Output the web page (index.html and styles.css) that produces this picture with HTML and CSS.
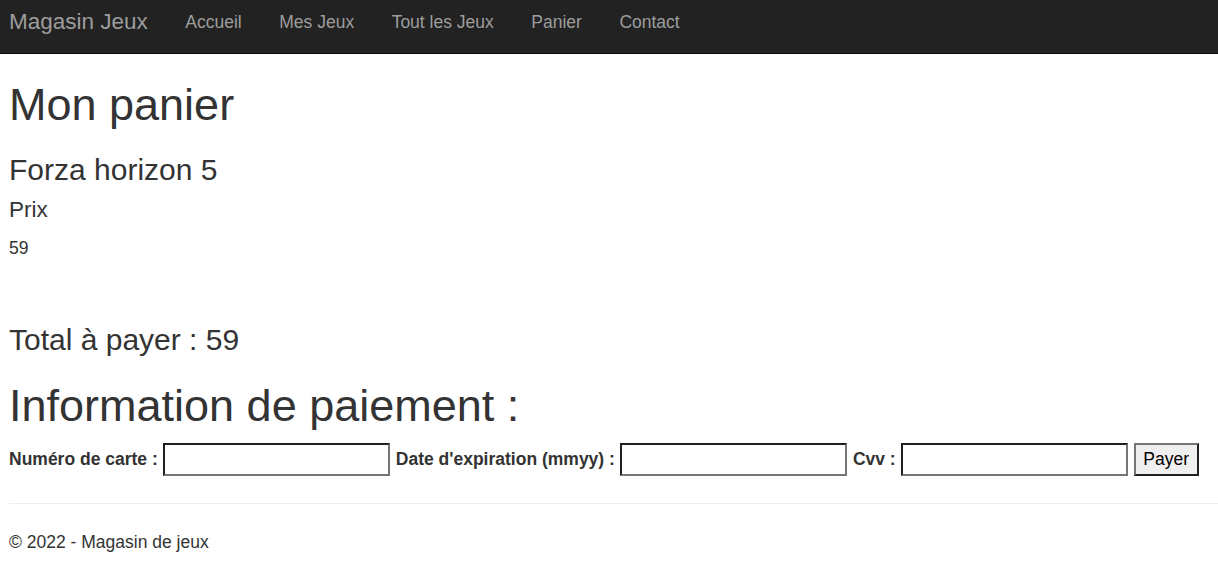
FILE: index.html
```html
<!DOCTYPE html>
<html lang="fr">
<head>
<meta charset="utf-8">
<title>Mon panier - Magasin Jeux</title>
<link rel="stylesheet" href="styles.css">
</head>
<body>
<nav class="navbar">
  <a class="brand" href="#">Magasin Jeux</a>
  <ul class="nav">
    <li><a href="#">Accueil</a></li>
    <li><a href="#">Mes Jeux</a></li>
    <li><a href="#">Tout les Jeux</a></li>
    <li><a href="#">Panier</a></li>
    <li><a href="#">Contact</a></li>
  </ul>
</nav>
<main class="content">
  <h1 class="title">Mon panier</h1>
  <h3 class="game">Forza horizon 5</h3>
  <h4 class="price-label">Prix</h4>
  <p class="price">59</p>
  <h3 class="total">Total à payer : 59</h3>
  <h1 class="pay-title">Information de paiement :</h1>
  <form class="pay-form">
    <label class="lbl" for="card">Numéro de carte :</label>
    <input class="field" id="card" type="text">
    <label class="lbl" for="exp">Date d'expiration (mmyy) :</label>
    <input class="field" id="exp" type="text">
    <label class="lbl" for="cvv">Cvv :</label>
    <input class="field" id="cvv" type="text">
    <button class="btn" type="button">Payer</button>
  </form>
  <hr class="sep">
  <footer class="footer">
    <p>© 2022 - Magasin de jeux</p>
  </footer>
</main>
</body>
</html>
```
FILE: styles.css
```css
* { box-sizing: border-box; }
html, body { margin: 0; padding: 0; }
body {
  font-family: "Liberation Sans", Arial, Helvetica, sans-serif;
  font-size: 17.5px;
  line-height: 25px;
  color: #333;
  background: #fff;
}
.navbar {
  display: flex;
  align-items: flex-start;
  height: 54px;
  background: #222;
  border-bottom: 1px solid #080808;
  padding-left: 9px;
}
.brand {
  font-size: 22.5px;
  line-height: 22.5px;
  padding: 11px 18.75px 0 0;
  color: #9d9d9d;
  text-decoration: none;
}
.nav {
  display: flex;
  list-style: none;
  margin: 0;
  padding: 0;
}
.nav a {
  display: block;
  font-size: 17.5px;
  line-height: 17.5px;
  padding: 14px 18.75px 0;
  color: #9d9d9d;
  text-decoration: none;
}
.content {
  padding-left: 9px;
}
h1, h3, h4 {
  font-weight: 500;
  line-height: 1.1;
  margin: 0;
}
.title { font-size: 45px; margin-top: 25.6px; }
.game { font-size: 30px; margin-top: 24px; }
.price-label { font-size: 22.5px; margin-top: 12px; }
.price { margin: 13.5px 0 0; }
.total { font-size: 30px; margin-top: 61.7px; }
.pay-title { font-size: 45px; margin-top: 25.25px; }
.pay-form {
  display: flex;
  align-items: flex-start;
  gap: 5.5px;
  margin-top: 12.45px;
}
.lbl {
  font-weight: bold;
  padding-top: 4px;
}
.field {
  width: 227px;
  height: 32.4px;
  border: 2px solid;
  border-color: #1f1f1f #767676 #767676 #1f1f1f;
  background: #fff;
  padding: 1px 2px;
  font: 17px "Liberation Sans", Arial, sans-serif;
}
.btn {
  width: 65px;
  height: 32.4px;
  border: 2px solid;
  border-color: #767676 #1f1f1f #1f1f1f #767676;
  background: #efefef;
  color: #000;
  padding: 1px 0 0;
  font: 17.5px "Liberation Sans", Arial, sans-serif;
}
.sep {
  border: 0;
  border-top: 1px solid #eee;
  margin: 27px 0 0;
}
.footer p {
  margin: 26px 0 0;
}
```
